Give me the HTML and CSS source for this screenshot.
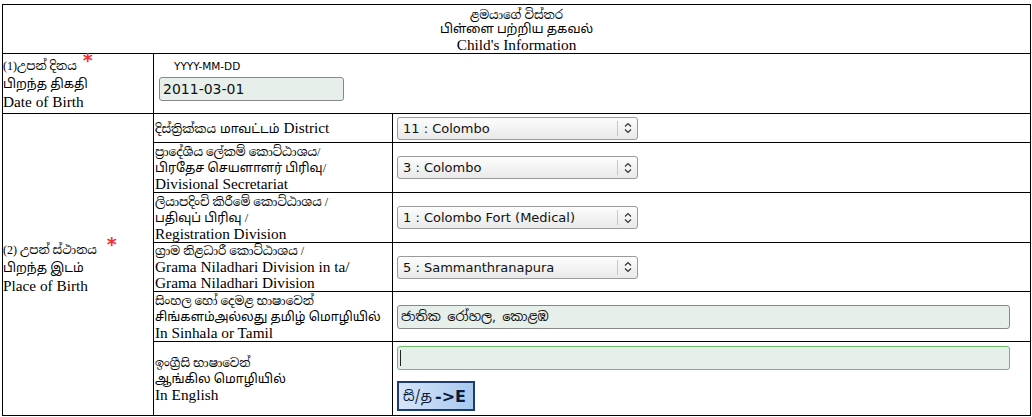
FILE: index.html
```html
<!DOCTYPE html>
<html>
<head>
<meta charset="utf-8">
<link rel="stylesheet" href="styles.css">
</head>
<body>
<table class="form">
  <colgroup>
    <col class="c1">
    <col class="c2">
    <col class="c3">
  </colgroup>
  <tr class="r-head">
    <td colspan="3" class="head">
      <div class="si">ළමයාගේ විස්තර</div>
      <div class="ta">பிள்ளை பற்றிய தகவல்</div>
      <div class="en">Child's Information</div>
    </td>
  </tr>
  <tr class="r-dob">
    <td class="lab">
      <div class="si">(1)උපන් දිනය<span class="req">*</span></div>
      <div class="ta">பிறந்த திகதி</div>
      <div class="en">Date of Birth</div>
    </td>
    <td colspan="2" class="dobcell">
      <div class="hint">YYYY-MM-DD</div>
      <input class="txt dob" type="text" value="2011-03-01">
    </td>
  </tr>
  <tr class="r-29">
    <td rowspan="6" class="lab place">
      <div class="si">(2) උපන් ස්ථානය<span class="req far">*</span></div>
      <div class="ta">பிறந்த இடம்</div>
      <div class="en">Place of Birth</div>
    </td>
    <td class="sub one"><span class="si">දිස්ත්‍රික්කය</span> <span class="ta">மாவட்டம்</span> <span class="en">District</span></td>
    <td class="fld">
      <div class="sel">
        <select><option>11 : Colombo</option></select>
        <span class="arr"><svg width="8" height="12" viewBox="0 0 8 12"><path d="M1 4.5 L4 1.5 L7 4.5 M1 7.5 L4 10.5 L7 7.5" fill="none" stroke="#333" stroke-width="1.2"/></svg></span>
      </div>
    </td>
  </tr>
  <tr class="r-50">
    <td class="sub">
      <div class="si">ප්‍රාදේශීය ලේකම් කොට්ඨාශය/</div>
      <div class="ta">பிரதேச செயளாளர் பிரிவு/</div>
      <div class="en">Divisional Secretariat</div>
    </td>
    <td class="fld">
      <div class="sel">
        <select><option>3 : Colombo</option></select>
        <span class="arr"><svg width="8" height="12" viewBox="0 0 8 12"><path d="M1 4.5 L4 1.5 L7 4.5 M1 7.5 L4 10.5 L7 7.5" fill="none" stroke="#333" stroke-width="1.2"/></svg></span>
      </div>
    </td>
  </tr>
  <tr class="r-50">
    <td class="sub">
      <div class="si">ලියාපදිංචි කිරීමේ කොට්ඨාශය /</div>
      <div class="ta">பதிவுப் பிரிவு /</div>
      <div class="en">Registration Division</div>
    </td>
    <td class="fld">
      <div class="sel">
        <select><option>1 : Colombo Fort (Medical)</option></select>
        <span class="arr"><svg width="8" height="12" viewBox="0 0 8 12"><path d="M1 4.5 L4 1.5 L7 4.5 M1 7.5 L4 10.5 L7 7.5" fill="none" stroke="#333" stroke-width="1.2"/></svg></span>
      </div>
    </td>
  </tr>
  <tr class="r-49">
    <td class="sub">
      <div class="si">ග්‍රාම නිළධාරී කොට්ඨාශය /</div>
      <div class="en">Grama Niladhari Division in ta/</div>
      <div class="en">Grama Niladhari Division</div>
    </td>
    <td class="fld">
      <div class="sel">
        <select><option>5 : Sammanthranapura</option></select>
        <span class="arr"><svg width="8" height="12" viewBox="0 0 8 12"><path d="M1 4.5 L4 1.5 L7 4.5 M1 7.5 L4 10.5 L7 7.5" fill="none" stroke="#333" stroke-width="1.2"/></svg></span>
      </div>
    </td>
  </tr>
  <tr class="r-50">
    <td class="sub">
      <div class="si">සිංහල හෝ දෙමළ භාෂාවෙන්</div>
      <div class="ta">சிங்களம்அல்லது தமிழ் மொழியில்</div>
      <div class="en">In Sinhala or Tamil</div>
    </td>
    <td class="fld">
      <input class="txt wide si-in" type="text" value="ජාතික රෝහල, කොළඹ">
    </td>
  </tr>
  <tr class="r-74">
    <td class="sub">
      <div class="si">ඉංග්‍රීසි භාෂාවෙන්</div>
      <div class="ta">ஆங்கில மொழியில்</div>
      <div class="en">In English</div>
    </td>
    <td class="fld top">
      <div class="focus-wrap"><input class="txt wide focused" type="text" value=""><span class="caret"></span></div>
      <button class="conv"><span class="bsi">සි/த</span> <span class="ben">-&gt;E</span></button>
    </td>
  </tr>
</table>
</body>
</html>
```
FILE: styles.css
```css
html, body {
  margin: 0;
  padding: 0;
  background: #fff;
}
body {
  padding: 4px 2px 0 2px;
  font-family: "Liberation Serif", "Noto Serif Sinhala", "Noto Sans Sinhala", "Noto Sans Tamil", serif;
  color: #000;
}
.form {
  border-collapse: collapse;
  width: 1028px;
  table-layout: fixed;
}
.form td {
  border: 1px solid #000;
  padding: 0 1px;
  vertical-align: middle;
  line-height: 16px;
}
.c1 { width: 151px; }
.c2 { width: 239px; }
.c3 { width: 638px; }

.si { font-size: 12px; line-height: 16px; }
.ta { font-size: 12.5px; line-height: 16px; }
.en { font-size: 15.3px; line-height: 16px; }

.sub > div { height: 16px; overflow: visible; white-space: nowrap; }
.sub.one { white-space: nowrap; }
.lab > div { height: 18px; line-height: 18px; overflow: visible; white-space: nowrap; }

.r-head td { height: 45px; }
.form td.head { padding-top: 3px; }
.head { text-align: center; }
.head > div { overflow: visible; }
.head .si { font-size: 12px; line-height: 13px; height: 13px; }
.head .ta { font-size: 12.5px; line-height: 15px; height: 15px; }
.head .en { font-size: 15.3px; line-height: 16px; height: 16px; }

.r-dob td { height: 59px; }
.lab { padding-left: 0 !important; }
.form td.place { padding-top: 6px; }
.req {
  color: #e8333a;
  font-family: "DejaVu Sans", sans-serif;
  font-size: 19px;
  font-weight: bold;
  vertical-align: 3px;
  line-height: 0;
  margin-left: 6px;
}
.req.far { margin-left: 10px; }
.dobcell {
  padding-left: 5px !important;
  vertical-align: top !important;
}
.hint {
  font-family: "DejaVu Sans", sans-serif;
  font-size: 10.5px;
  padding-left: 15px;
  line-height: 14px;
  height: 14px;
  margin-top: 5px;
  margin-bottom: 4px;
}
.txt {
  box-sizing: border-box;
  height: 24px;
  border: 1px solid #888;
  border-radius: 3px;
  background: #e7efea;
  font-family: "DejaVu Sans", sans-serif;
  font-size: 14px;
  color: #111;
  padding: 0 3px;
  margin: 0;
  outline: none;
  display: block;
}
.dob { width: 185px; }

.r-29 td { height: 28px; }
.r-50 td { height: 49px; }
.r-49 td { height: 48px; }
.r-74 td { height: 73px; }

.fld { padding-left: 4px !important; }
.fld.top { vertical-align: top; }
.fld.top .focus-wrap { margin-top: 4px; }

.sel {
  position: relative;
  width: 241px;
  height: 23px;
}
.sel select {
  appearance: none;
  -webkit-appearance: none;
  box-sizing: border-box;
  width: 100%;
  height: 100%;
  border: 1px solid #9a9a9a;
  border-radius: 3px;
  background: linear-gradient(#fdfdfd, #e9e9e9);
  font-family: "DejaVu Sans", sans-serif;
  font-size: 13px;
  color: #111;
  padding: 0 24px 0 5px;
  margin: 0;
  outline: none;
}
.arr {
  position: absolute;
  right: 1px;
  top: 4px;
  bottom: 4px;
  width: 19px;
  border-left: 1px solid #c8c8c8;
  display: flex;
  align-items: center;
  justify-content: center;
  pointer-events: none;
}
.wide { width: 613px; }
.si-in { font-family: "Noto Sans Sinhala", "Noto Serif Sinhala", sans-serif; font-size: 13px; }
.focus-wrap { position: relative; width: 613px; }
.focused { border-color: #6cbc6c; }
.caret {
  position: absolute;
  left: 3px;
  top: 4px;
  width: 1px;
  height: 16px;
  background: #222;
}
.conv {
  margin-top: 11px;
  box-sizing: border-box;
  height: 30px;
  width: 78px;
  border: 2px solid #1e3c6e;
  border-radius: 0;
  background: linear-gradient(90deg, #d6e5f8, #a9c8ef);
  padding: 0 4px;
  display: flex;
  align-items: center;
  gap: 3px;
  color: #0a1a3a;
}
.bsi { font-family: "Noto Sans Sinhala", "Noto Sans Tamil", "DejaVu Sans", sans-serif; font-size: 14px; }
.ben { font-family: "DejaVu Sans", sans-serif; font-size: 16px; font-weight: bold; letter-spacing: 0; }
```
